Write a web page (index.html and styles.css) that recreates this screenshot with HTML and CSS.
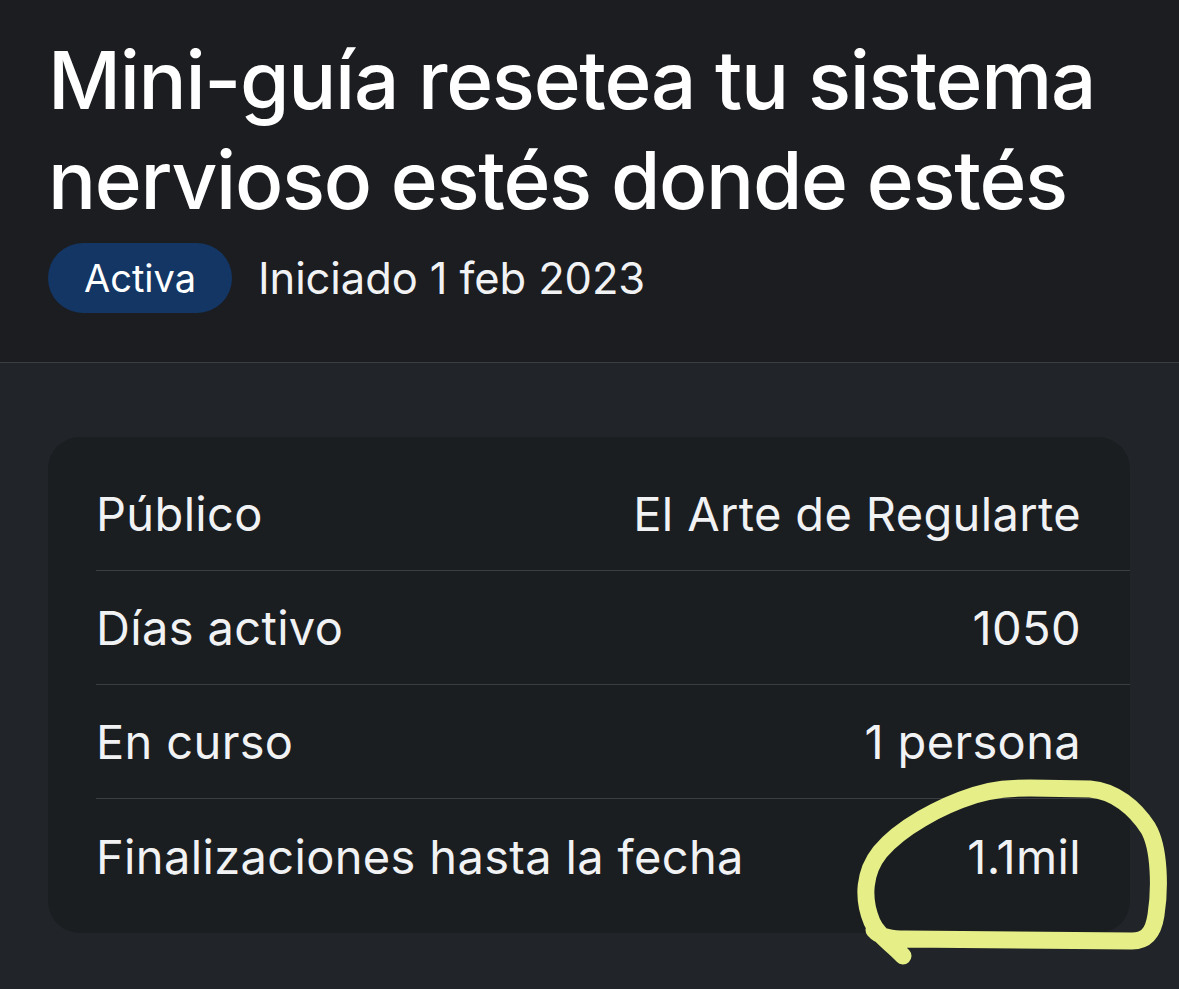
FILE: index.html
```html
<!DOCTYPE html>
<html lang="es">
<head>
<meta charset="utf-8">
<link rel="stylesheet" href="styles.css">
</head>
<body>
<header class="hero">
  <h1 class="title">Mini-guía resetea tu sistema nervioso estés donde estés</h1>
  <div class="meta">
    <span class="badge">Activa</span>
    <span class="started">Iniciado 1 feb 2023</span>
  </div>
</header>
<main class="content">
  <section class="card">
    <div class="row"><span class="label">Público</span><span class="value">El Arte de Regularte</span></div>
    <div class="row"><span class="label">Días activo</span><span class="value">1050</span></div>
    <div class="row"><span class="label">En curso</span><span class="value">1 persona</span></div>
    <div class="row"><span class="label">Finalizaciones hasta la fecha</span><span class="value">1.1mil</span></div>
  </section>
</main>
<svg class="scribble" width="1179" height="989" viewBox="0 0 1179 989">
  <path d="M903 956 C892 944 878 936 872 922 C862 898 864 872 880 852 C900 828 940 806 975 795 C995 789 1010 788 1030 788 L1090 789 C1115 791 1135 808 1148 828 C1160 848 1160 890 1156 915 C1153 935 1145 941 1132 941 L905 939 C890 939 880 937 874 930" fill="none" stroke="#e5ee87" stroke-width="17" stroke-linecap="round" stroke-linejoin="round"/>
</svg>
</body>
</html>
```
FILE: styles.css
```css
* { box-sizing: border-box; }
html, body {
  margin: 0;
  padding: 0;
  width: 1179px;
  height: 989px;
  overflow: hidden;
  background: #212428;
  font-family: Inter, "Noto Sans", sans-serif;
  color: #f4f5f7;
}
.hero {
  background: #1b1d20;
  padding: 30px 40px 49px 48px;
  border-bottom: 1px solid #3a3d42;
}
.title {
  margin: 0;
  font-size: 80px;
  line-height: 100px;
  font-weight: 500;
  letter-spacing: -1.3px;
  color: #ffffff;
}
.meta {
  margin-top: 13px;
  display: flex;
  align-items: center;
  gap: 26px;
}
.badge {
  display: inline-flex;
  align-items: center;
  justify-content: center;
  height: 70px;
  width: 184px;
  border-radius: 35px;
  background: #133665;
  font-size: 38px;
  color: #ffffff;
}
.started {
  font-size: 43.5px;
  letter-spacing: -0.1px;
  color: #f1f2f4;
}
.content {
  padding: 74px 49px 0 48px;
}
.card {
  background: #1b1e21;
  border-radius: 32px;
  padding: 20px 0 20px 48px;
}
.row {
  height: 114px;
  display: flex;
  align-items: center;
  justify-content: space-between;
  padding-right: 49px;
  border-bottom: 1px solid #3a3d42;
  font-size: 47px;
  letter-spacing: 0.35px;
}
.row:last-child { border-bottom: none; }
.label { color: #f1f2f4; }
.value { color: #f1f2f4; }
.scribble {
  position: absolute;
  left: 0;
  top: 0;
  pointer-events: none;
}
```
